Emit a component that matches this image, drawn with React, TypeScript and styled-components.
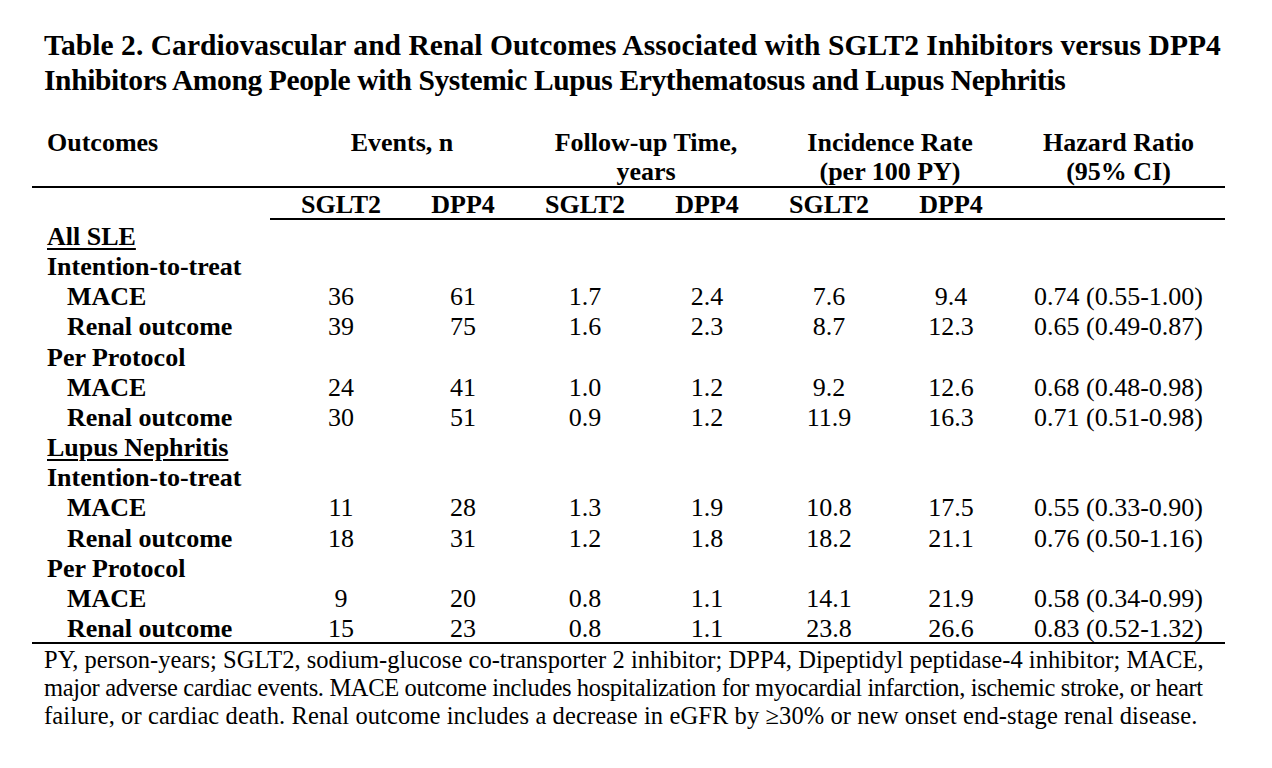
import React from "react";
import styled, { createGlobalStyle } from "styled-components";

const Global = createGlobalStyle`
  html, body { margin: 0; padding: 0; background: #ffffff; }
  body { font-family: "Liberation Serif", "Times New Roman", serif; color: #000; }
`;

const Page = styled.div`
  width: 1272px;
  padding: 28px 0 0 32px;
  box-sizing: border-box;
`;

const Title = styled.h1`
  margin: 0 0 30px 12px;
  font-size: 29.5px;
  line-height: 35px;
  font-weight: bold;
`;

const Line = styled.span<{ $track?: number }>`
  display: block;
  white-space: nowrap;
  letter-spacing: ${(p) => p.$track ?? 0}px;
`;

const Grid = styled.div`
  width: 1193px;
  display: grid;
  grid-template-columns: 248px repeat(6, 122px) 1fr;
  font-size: 26px;
`;

const HeadCell = styled.div<{ $span?: number; $left?: boolean }>`
  grid-column: span ${(p) => p.$span ?? 1};
  font-weight: bold;
  line-height: 29px;
  text-align: ${(p) => (p.$left ? "left" : "center")};
  padding-left: ${(p) => (p.$left ? "15px" : "0")};
  border-bottom: 2px solid #000;
`;

const SubCell = styled.div`
  font-weight: bold;
  padding-top: 3px;
  line-height: 27px;
  text-align: center;
`;

const SubRule = styled.div`
  grid-column: 2 / -1;
  margin-left: -10px;
  border-top: 2px solid #000;
`;

const Label = styled.div<{ $indent?: boolean; $under?: boolean }>`
  font-weight: bold;
  padding-top: 3px;
  line-height: 27.15px;
  padding-left: ${(p) => (p.$indent ? "35px" : "15px")};
  text-decoration: ${(p) => (p.$under ? "underline" : "none")};
  text-decoration-thickness: 2px;
  text-underline-offset: 3px;
  white-space: nowrap;
`;

const GroupLabel = styled(Label)`
  grid-column: 1 / -1;
`;

const Value = styled.div`
  padding-top: 3px;
  line-height: 27.15px;
  text-align: center;
  white-space: nowrap;
`;

const BottomRule = styled.div`
  grid-column: 1 / -1;
  border-top: 2px solid #000;
`;

const Footnote = styled.div`
  margin: 2px 0 0 12px;
  font-size: 24.5px;
  line-height: 28px;
`;

type Row = { label: string; v: string[] };
type Block = { name: string; rows: Row[] };
type Section = { name: string; blocks: Block[] };

const data: Section[] = [
  {
    name: "All SLE",
    blocks: [
      {
        name: "Intention-to-treat",
        rows: [
          { label: "MACE", v: ["36", "61", "1.7", "2.4", "7.6", "9.4", "0.74 (0.55-1.00)"] },
          { label: "Renal outcome", v: ["39", "75", "1.6", "2.3", "8.7", "12.3", "0.65 (0.49-0.87)"] },
        ],
      },
      {
        name: "Per Protocol",
        rows: [
          { label: "MACE", v: ["24", "41", "1.0", "1.2", "9.2", "12.6", "0.68 (0.48-0.98)"] },
          { label: "Renal outcome", v: ["30", "51", "0.9", "1.2", "11.9", "16.3", "0.71 (0.51-0.98)"] },
        ],
      },
    ],
  },
  {
    name: "Lupus Nephritis",
    blocks: [
      {
        name: "Intention-to-treat",
        rows: [
          { label: "MACE", v: ["11", "28", "1.3", "1.9", "10.8", "17.5", "0.55 (0.33-0.90)"] },
          { label: "Renal outcome", v: ["18", "31", "1.2", "1.8", "18.2", "21.1", "0.76 (0.50-1.16)"] },
        ],
      },
      {
        name: "Per Protocol",
        rows: [
          { label: "MACE", v: ["9", "20", "0.8", "1.1", "14.1", "21.9", "0.58 (0.34-0.99)"] },
          { label: "Renal outcome", v: ["15", "23", "0.8", "1.1", "23.8", "26.6", "0.83 (0.52-1.32)"] },
        ],
      },
    ],
  },
];

const subs = ["SGLT2", "DPP4", "SGLT2", "DPP4", "SGLT2", "DPP4", ""];

const foot: { text: string; track: number }[] = [
  {
    text: "PY, person-years; SGLT2, sodium-glucose co-transporter 2 inhibitor; DPP4, Dipeptidyl peptidase-4 inhibitor; MACE,",
    track: 0.03,
  },
  {
    text: "major adverse cardiac events. MACE outcome includes hospitalization for myocardial infarction, ischemic stroke, or heart",
    track: -0.35,
  },
  {
    text: "failure, or cardiac death. Renal outcome includes a decrease in eGFR by ≥30% or new onset end-stage renal disease.",
    track: 0.1,
  },
];

export default function App() {
  return (
    <Page>
      <Global />
      <Title>
        <Line $track={0.05}>
          Table 2. Cardiovascular and Renal Outcomes Associated with SGLT2 Inhibitors versus DPP4
        </Line>
        <Line $track={-0.37}>
          Inhibitors Among People with Systemic Lupus Erythematosus and Lupus Nephritis
        </Line>
      </Title>
      <Grid>
        <HeadCell $left>Outcomes</HeadCell>
        <HeadCell $span={2}>Events, n</HeadCell>
        <HeadCell $span={2}>
          Follow-up Time,
          <br />
          years
        </HeadCell>
        <HeadCell $span={2}>
          Incidence Rate
          <br />
          (per 100 PY)
        </HeadCell>
        <HeadCell>
          Hazard Ratio
          <br />
          (95% CI)
        </HeadCell>
        <SubCell />
        {subs.map((s, i) => (
          <SubCell key={i}>{s}</SubCell>
        ))}
        <SubRule />
        {data.map((sec) => (
          <React.Fragment key={sec.name}>
            <GroupLabel $under>{sec.name}</GroupLabel>
            {sec.blocks.map((b) => (
              <React.Fragment key={b.name}>
                <GroupLabel>{b.name}</GroupLabel>
                {b.rows.map((r) => (
                  <React.Fragment key={r.label}>
                    <Label $indent>{r.label}</Label>
                    {r.v.map((x, i) => (
                      <Value key={i}>{x}</Value>
                    ))}
                  </React.Fragment>
                ))}
              </React.Fragment>
            ))}
          </React.Fragment>
        ))}
        <BottomRule />
      </Grid>
      <Footnote>
        {foot.map((l, i) => (
          <Line key={i} $track={l.track}>
            {l.text}
          </Line>
        ))}
      </Footnote>
    </Page>
  );
}
